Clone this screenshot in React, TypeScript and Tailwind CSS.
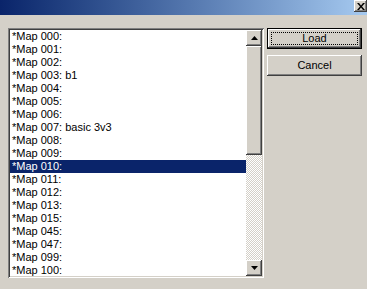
const maps = [
  '*Map 000:',
  '*Map 001:',
  '*Map 002:',
  '*Map 003: b1',
  '*Map 004:',
  '*Map 005:',
  '*Map 006:',
  '*Map 007: basic 3v3',
  '*Map 008:',
  '*Map 009:',
  '*Map 010:',
  '*Map 011:',
  '*Map 012:',
  '*Map 013:',
  '*Map 015:',
  '*Map 045:',
  '*Map 047:',
  '*Map 099:',
  '*Map 100:',
]

const bevel =
  'shadow-[inset_-1px_-1px_#404040,inset_1px_1px_#ffffff,inset_-2px_-2px_#808080,inset_2px_2px_#d4d0c8]'

function Arrow({ up }: { up?: boolean }) {
  return (
    <svg width="7" height="4" viewBox="0 0 7 4" className="block">
      {up ? <path d="M3.5 0 L7 4 L0 4 Z" fill="#000" /> : <path d="M0 0 L7 0 L3.5 4 Z" fill="#000" />}
    </svg>
  )
}

function ScrollButton({ up }: { up?: boolean }) {
  return (
    <div className={`h-4 w-4 shrink-0 bg-[#d4d0c8] flex items-center justify-center ${bevel}`}>
      <Arrow up={up} />
    </div>
  )
}

function Button({ label, isDefault }: { label: string; isDefault?: boolean }) {
  if (isDefault) {
    return (
      <div className="h-[21px] w-[95px] border border-black bg-[#d4d0c8] p-0">
        <div className={`h-full w-full flex items-center justify-center p-[3px] ${bevel}`}>
          <div className="h-full w-full border border-dotted border-black flex items-center justify-center text-[11px] leading-none text-black">
            {label}
          </div>
        </div>
      </div>
    )
  }
  return (
    <div className={`h-[21px] w-[95px] bg-[#d4d0c8] flex items-center justify-center text-[11px] leading-none text-black ${bevel}`}>
      {label}
    </div>
  )
}

export default function App() {
  return (
    <div
      className="w-[367px] h-[289px] overflow-hidden bg-[#d4d0c8] flex flex-col"
      style={{ fontFamily: '"Liberation Sans", Arial, sans-serif' }}
    >
      {/* title bar, cut at the top */}
      <div className="h-[15px] shrink-0 bg-gradient-to-r from-[#0a246a] to-[#a6caf0] flex justify-end items-start">
        <div className={`h-[12px] w-[13px] mr-0 bg-[#d4d0c8] flex items-center justify-center ${bevel}`}>
          <svg width="8" height="7" viewBox="0 0 8 7">
            <path d="M0 0 L2 0 L4 2.5 L6 0 L8 0 L5 3.5 L8 7 L6 7 L4 4.5 L2 7 L0 7 L3 3.5 Z" fill="#000" />
          </svg>
        </div>
      </div>

      <div className="flex items-start pt-[13px] pl-2 gap-[3px]">
        {/* list box */}
        <div className="w-[256px] h-[250px] shrink-0 bg-white flex shadow-[inset_1px_1px_#808080,inset_-1px_-1px_#ffffff,inset_2px_2px_#404040,inset_-2px_-2px_#d4d0c8] p-[2px]">
          <div className="flex-1 flex flex-col pt-0">
            {maps.map((m, i) => (
              <div
                key={m}
                className={`h-[13px] shrink-0 pl-[2px] text-[11px] leading-[13px] whitespace-nowrap ${
                  i === 10 ? 'bg-[#0a246a] text-white' : 'text-black'
                }`}
              >
                {m}
              </div>
            ))}
          </div>
          <div className="w-4 h-full flex flex-col">
            <ScrollButton up />
            <div className="flex-1 flex flex-col bg-[image:repeating-conic-gradient(#d4d0c8_0_25%,#ffffff_0_50%)] bg-[length:2px_2px]">
              <div className={`h-[109px] shrink-0 bg-[#d4d0c8] ${bevel}`} />
            </div>
            <ScrollButton />
          </div>
        </div>

        {/* buttons */}
        <div className="flex flex-col gap-[6px] ml-0">
          <Button label="Load" isDefault />
          <Button label="Cancel" />
        </div>
      </div>
    </div>
  )
}
